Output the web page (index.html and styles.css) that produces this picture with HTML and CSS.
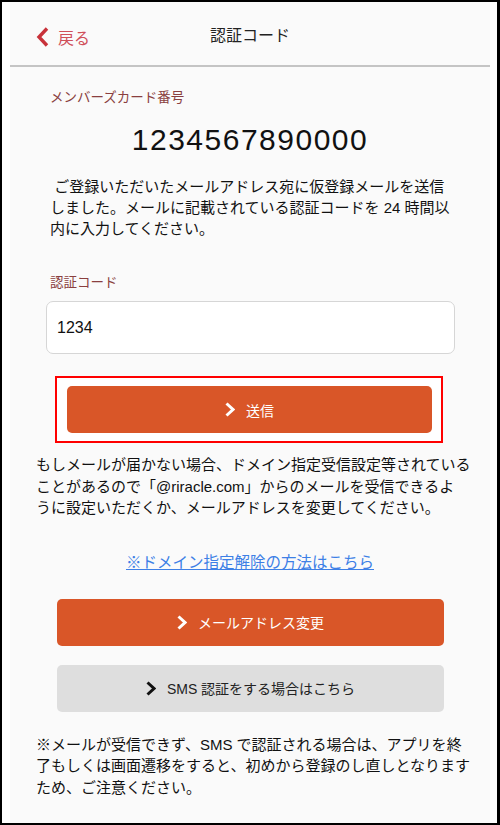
FILE: index.html
```html
<!DOCTYPE html>
<html lang="ja">
<head>
    <meta charset="UTF-8">
    <meta name="viewport" content="width=device-width, initial-scale=1.0">
    <title>認証コード</title>
    <link rel="stylesheet" href="styles.css">
</head>
<body>

<div class="frame">
    <div class="screen">
        <header class="nav">
            <a class="back" href="#">
                <svg width="13" height="20" viewBox="0 0 13 20"><path d="M11 1.5 L3 10 L11 18.5" fill="none" stroke="#c8323a" stroke-width="3.4"/></svg>
                <span>戻る</span>
            </a>
            <h1>認証コード</h1>
        </header>

        <main class="content">
            <p class="label">メンバーズカード番号</p>
            <p class="card-number">1234567890000</p>
            <p class="lead">&nbsp;ご登録いただいたメールアドレス宛に仮登録メールを送信<br>しました。メールに記載されている認証コードを 24 時間以<br>内に入力してください。</p>

            <p class="label code-label">認証コード</p>
            <input class="code-input" type="text" value="1234">

            <div class="highlight">
                <button class="btn btn-orange">
                    <svg width="10" height="15" viewBox="0 0 10 15"><path d="M1.5 1.5 L8 7.5 L1.5 13.5" fill="none" stroke="#fff" stroke-width="3"/></svg>
                    送信
                </button>
            </div>

            <p class="notice">もしメールが届かない場合、ドメイン指定受信設定等されている<br>ことがあるので「@riracle.com」からのメールを受信できるよ<br>うに設定いただくか、メールアドレスを変更してください。</p>

            <p class="link-row"><a href="#">※ドメイン指定解除の方法はこちら</a></p>

            <button class="btn btn-orange wide">
                <svg width="10" height="15" viewBox="0 0 10 15"><path d="M1.5 1.5 L8 7.5 L1.5 13.5" fill="none" stroke="#fff" stroke-width="3"/></svg>
                メールアドレス変更
            </button>
            <button class="btn btn-gray wide">
                <svg width="10" height="15" viewBox="0 0 10 15"><path d="M1.5 1.5 L8 7.5 L1.5 13.5" fill="none" stroke="#111" stroke-width="3"/></svg>
                SMS 認証をする場合はこちら
            </button>

            <p class="notice note">※メールが受信できず、SMS で認証される場合は、アプリを終<br>了もしくは画面遷移をすると、初めから登録のし直しとなります<br>ため、ご注意ください。</p>
        </main>
    </div>
</div>

</body>
</html>
```

FILE: styles.css
```css
* {
    box-sizing: border-box;
}

body {
    margin: 0;
    font-family: "Liberation Sans", "Noto Sans CJK JP", sans-serif;
    color: #111;
}

.frame {
    width: 500px;
    height: 825px;
    border-style: solid;
    border-color: #000;
    border-width: 2px 3px 2px 2px;
    background-color: #fff;
    padding: 0 7px 0 8px;
    overflow: hidden;
}

.screen {
    height: 100%;
    background-color: #fafafa;
}

.nav {
    position: relative;
    height: 65px;
    border-bottom: 2px solid #c4c4c4;
    display: flex;
    align-items: center;
    justify-content: center;
}

.nav h1 {
    margin: 0;
    font-size: 16px;
    font-weight: normal;
    color: #222;
}

.back {
    position: absolute;
    left: 26px;
    top: 23px;
    display: flex;
    align-items: center;
    gap: 9px;
    color: #d0505a;
    font-size: 16px;
    text-decoration: none;
}

.content {
    padding-top: 21px;
}

p {
    margin: 0;
}

.label {
    padding-left: 40px;
    font-size: 13.5px;
    line-height: 19px;
    color: #8a3f3f;
}

.card-number {
    margin-top: 15px;
    text-align: center;
    font-size: 30px;
    line-height: 36px;
    letter-spacing: 1.5px;
    color: #111;
}

.lead {
    margin-top: 18px;
    padding-left: 40px;
    font-size: 15px;
    line-height: 21px;
    white-space: nowrap;
}

.code-label {
    margin-top: 34px;
}

.code-input {
    display: block;
    width: 409px;
    height: 53px;
    margin: 9px 0 0 36px;
    padding: 0 10px;
    border: 1px solid #d6d6d6;
    border-radius: 7px;
    background-color: #fff;
    font-family: "Liberation Sans", sans-serif;
    font-size: 16px;
    color: #111;
}

.highlight {
    width: 388px;
    margin: 22px 0 0 45px;
    padding: 8px 9px 8px 10px;
    border: 2px solid #f00;
    background-color: #fff;
}

.btn {
    display: flex;
    align-items: center;
    justify-content: center;
    gap: 11px;
    width: 100%;
    height: 47px;
    border: none;
    border-radius: 5px;
    font-family: "Liberation Sans", "Noto Sans CJK JP", sans-serif;
    font-size: 14px;
}

.btn-orange {
    background-color: #d95628;
    color: #fff;
}

.btn-gray {
    background-color: #dedede;
    color: #222;
}

.wide {
    width: 387px;
    margin-left: 47px;
}

.notice {
    margin-top: 11px;
    padding-left: 26px;
    font-size: 15px;
    line-height: 21.5px;
    white-space: nowrap;
}

.link-row {
    margin-top: 33px;
    text-align: center;
    font-size: 15.5px;
    line-height: 21px;
}

.link-row a {
    color: #3d7fe6;
}

.link-row + .btn {
    margin-top: 26px;
}

.btn-gray {
    margin-top: 19px;
}

.note {
    margin-top: 22px;
}
```
